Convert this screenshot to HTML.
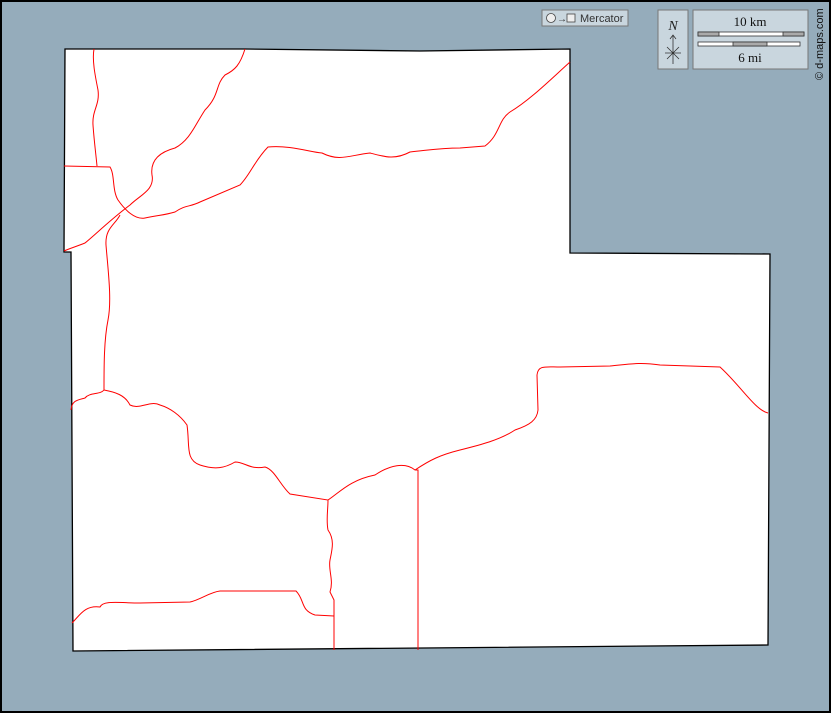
<!DOCTYPE html>
<html><head><style>
body{margin:0;width:831px;height:713px;overflow:hidden;background:#000}
</style></head><body>
<svg width="831" height="713" xmlns="http://www.w3.org/2000/svg" style="display:block">
<rect x="0" y="0" width="831" height="713" fill="#000"/>
<rect x="2" y="2" width="827" height="709" fill="#95acbb"/>
<path d="M65,49 L245,49 L420,51 L570,49 L570,253 L770,254 L768,645 L73,651 L71,252 L64,252 Z" fill="#fff" stroke="#000" stroke-width="1.3"/>
<g fill="none" stroke="#f00" stroke-width="1">
<path d="M94,49 C92,60 95,75 98,90 C100,105 92,110 93,125 C94,140 96,155 97,166"/>
<path d="M64,166 L110,167 C115,175 112,190 118,200 C125,210 135,220 145,218 C160,215 165,215 175,212 C185,205 190,207 200,202 L240,185 C250,175 255,160 268,147 C290,145 310,152 322,153 C340,162 350,155 370,153 C385,157 395,160 410,152 C430,150 440,148 460,148 L485,146 C500,135 498,120 510,112 C530,100 550,80 570,62"/>
<path d="M245,49 C240,65 235,70 225,75 C215,85 220,95 205,110 C195,125 190,140 175,148 C160,152 150,160 152,175 C155,190 140,195 130,205 C110,220 95,235 85,243 C75,247 68,249 64,251"/>
<path d="M120,215 C115,225 105,228 106,245 C108,270 112,300 108,320 C104,340 104,365 104,390 C100,395 90,392 85,398 C78,400 72,400 71,410"/>
<path d="M104,390 C115,392 125,395 130,405 C140,410 150,400 160,405 C170,408 180,415 187,425 C190,445 185,460 200,465 C215,470 225,468 235,462 C245,462 250,470 265,467 C275,470 280,485 290,494 L328,500 C328,510 326,520 328,530 C335,540 332,550 330,560 C328,570 334,580 330,592 L334,600 L334,650"/>
<path d="M328,500 C340,492 350,480 375,475 C390,465 405,462 415,470 L418,470 L418,650"/>
<path d="M415,470 C430,460 440,455 460,450 C480,445 500,440 515,430 C530,425 537,420 538,410 L537,375 C538,365 545,367 560,367 L610,366 C630,364 640,362 660,365 L720,367 C740,385 755,410 768,413"/>
<path d="M72,623 C80,615 85,605 100,607 C103,600 120,603 140,603 L190,602 C200,600 210,592 220,591 L296,591 C305,600 300,610 315,615 L334,616"/>
</g>
<rect x="542" y="10" width="86" height="16" fill="#c9d6de" stroke="#777"/>
<circle cx="551" cy="18" r="4.5" fill="#eee" stroke="#444" stroke-width="0.8"/>
<text x="557" y="22" font-family="Liberation Sans" font-size="10" fill="#333">→</text>
<rect x="567" y="14" width="8" height="8" fill="#eee" stroke="#444" stroke-width="0.8"/>
<text x="580" y="22" font-family="Liberation Sans" font-size="11" fill="#333">Mercator</text>
<rect x="658" y="10" width="30" height="59" fill="#c9d6de" stroke="#777"/>
<text x="673" y="30" font-family="Liberation Serif" font-style="italic" font-size="14" text-anchor="middle" fill="#222">N</text>
<path d="M673,35 L673,64 M665,53 L681,53 M667,47 L679,59 M679,47 L667,59 M670,39 L673,35 L676,39" stroke="#333" stroke-width="0.8" fill="none"/>
<rect x="693" y="10" width="115" height="59" fill="#c9d6de" stroke="#777"/>
<text x="750" y="26" font-family="Liberation Serif" font-size="13" text-anchor="middle" fill="#111">10 km</text>
<rect x="698" y="32" width="106" height="4" fill="#fff" stroke="#333" stroke-width="0.8"/>
<rect x="698" y="32" width="21" height="4" fill="#aaa" stroke="#333" stroke-width="0.8"/>
<rect x="783" y="32" width="21" height="4" fill="#aaa" stroke="#333" stroke-width="0.8"/>
<rect x="698" y="42" width="102" height="4" fill="#fff" stroke="#333" stroke-width="0.8"/>
<rect x="733" y="42" width="34" height="4" fill="#aaa" stroke="#333" stroke-width="0.8"/>
<text x="750" y="62" font-family="Liberation Serif" font-size="13" text-anchor="middle" fill="#111">6 mi</text>
<text transform="translate(823,80) rotate(-90)" font-family="Liberation Sans" font-size="11" fill="#111">© d-maps.com</text>
</svg>
</body></html>
